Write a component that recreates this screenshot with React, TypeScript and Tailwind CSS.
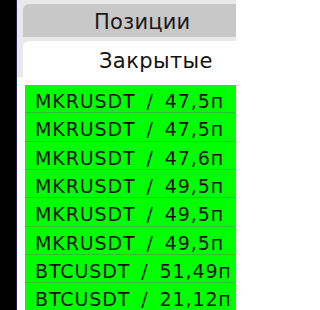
const rows = [
  "MKRUSDT / 47,5п",
  "MKRUSDT / 47,5п",
  "MKRUSDT / 47,6п",
  "MKRUSDT / 49,5п",
  "MKRUSDT / 49,5п",
  "MKRUSDT / 49,5п",
  "BTCUSDT / 51,49п",
  "BTCUSDT / 21,12п",
];

export default function App() {
  return (
    <div className="flex h-[310px] w-[236px] overflow-hidden font-['DejaVu_Sans',sans-serif]">
      <div className="w-[17px] shrink-0 border-r border-[#2a1f55] bg-black" />
      <div className="flex min-w-0 flex-1 flex-col bg-[#e9e9e9]">
        <div className="pl-[6px] pt-[4px]">
          <div className="h-[33px] whitespace-nowrap rounded-tl-[6px] bg-[#c8c8c8] pl-[71px] pt-[2px] text-[21px] leading-[33px] tracking-[0.2px] text-[#1a1a1a]">
            Позиции
          </div>
        </div>
        <div className="mt-[4px] pl-[6px]">
          <div className="h-[36px] whitespace-nowrap rounded-tl-[6px] bg-white pl-[76px] pt-[2px] text-[21px] leading-[36px] tracking-[0.4px] text-[#111111]">
            Закрытые
          </div>
        </div>
        <div className="flex-1 bg-white pl-[8px] pt-[8px]">
          {rows.map((r, i) => (
            <div
              key={i}
              className="box-border h-[28.33px] overflow-hidden whitespace-nowrap border-b-[1.5px] border-[#2cc02c] bg-[#00ff00] pl-[10px] pt-[6px] text-[19px] leading-[21px] tracking-[0.9px] text-[#0a150a] [word-spacing:4px]"
            >
              {r}
            </div>
          ))}
        </div>
      </div>
    </div>
  );
}
